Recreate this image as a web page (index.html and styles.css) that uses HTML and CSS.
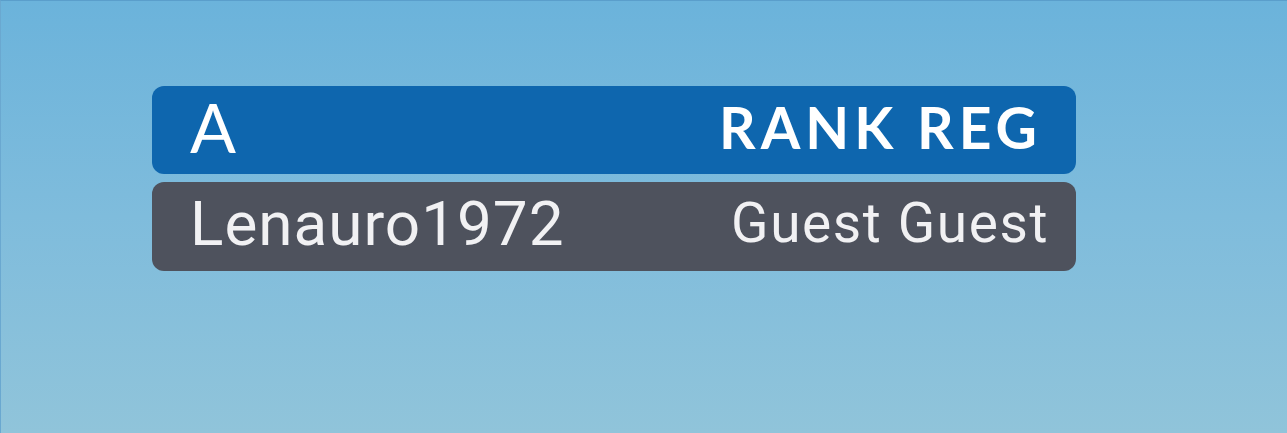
FILE: index.html
```html
<!DOCTYPE html>
<html>
<head>
<meta charset="utf-8">
<link rel="stylesheet" href="styles.css">
</head>
<body>
<div class="board">
  <div class="row row-head">
    <span class="head-left">A</span>
    <span class="head-right">RANK REG</span>
  </div>
  <div class="row row-user">
    <span class="user-name">Lenauro1972</span>
    <span class="user-rank">Guest Guest</span>
  </div>
</div>
</body>
</html>
```
FILE: styles.css
```css
html, body {
  margin: 0;
  padding: 0;
}
body {
  width: 1287px;
  height: 433px;
  box-sizing: border-box;
  background: linear-gradient(180deg, #6bb3db 0%, #7fbcdc 50%, #90c4da 100%);
  border-top: 1px solid #5a9ecb;
  border-left: 1px solid #6aa8d0;
  padding: 85px 0 0 151px;
  font-family: Roboto, "Liberation Sans", sans-serif;
}
.board {
  width: 924px;
  display: flex;
  flex-direction: column;
  gap: 8px;
}
.row {
  display: flex;
  justify-content: space-between;
  align-items: center;
  border-radius: 12px;
  color: #ffffff;
  box-sizing: border-box;
}
.row-head {
  height: 88px;
  background: #0e66ae;
  padding: 0 34px 6px 38px;
}
.row-user {
  height: 89px;
  background: #4e525d;
  padding: 0 27px 6px 38px;
  color: #f1f1f3;
}
.head-left {
  font-family: Lato, "Open Sans", sans-serif;
  font-weight: 400;
  font-size: 68px;
  line-height: 1;
}
.head-right {
  font-family: Lato, "Open Sans", sans-serif;
  font-weight: 700;
  font-size: 57px;
  letter-spacing: 5px;
  line-height: 1;
}
.user-name {
  font-size: 62px;
  letter-spacing: 1px;
  line-height: 1;
}
.user-rank {
  font-size: 55px;
  letter-spacing: 1.6px;
  line-height: 1;
}
```
